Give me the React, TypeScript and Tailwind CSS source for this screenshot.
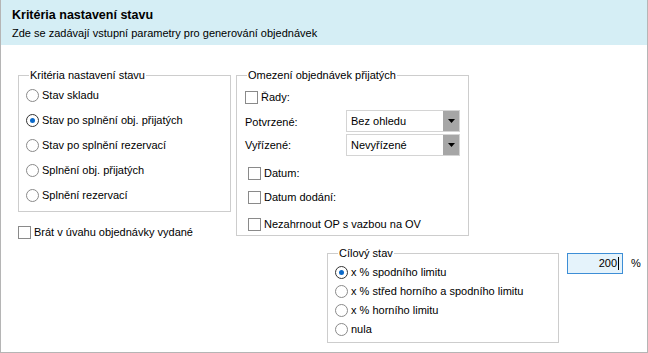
import React from "react";

const font = { fontFamily: '"Liberation Sans", Arial, sans-serif' };

function Radio({ checked }: { checked?: boolean }) {
  return (
    <span
      className={`relative flex h-[13px] w-[13px] shrink-0 items-center justify-center rounded-full border bg-white ${
        checked ? "border-[#333333]" : "border-[#8a8a8a]"
      }`}
    >
      {checked && <span className="h-[5px] w-[5px] rounded-full bg-[#0a68c8]" />}
    </span>
  );
}

function Check() {
  return <span className="block h-[13px] w-[13px] shrink-0 border border-[#8a8a8a] bg-white" />;
}

function RadioRow({ label, checked, h }: { label: string; checked?: boolean; h: string }) {
  return (
    <div className={`flex items-center gap-[3px] ${h}`}>
      <Radio checked={checked} />
      <span>{label}</span>
    </div>
  );
}

function Group({
  title,
  className,
  children,
}: {
  title: string;
  className: string;
  children: React.ReactNode;
}) {
  return (
    <div className={`relative shrink-0 border border-[#cdcdcd] ${className}`}>
      <span className="absolute left-[10px] top-[-8px] bg-white px-[1px] leading-[14px]">{title}</span>
      {children}
    </div>
  );
}

function Select({ value }: { value: string }) {
  return (
    <div className="flex h-[22px] w-[114px] items-stretch border border-[#d4d4d4] bg-white">
      <span className="flex-1 pl-[4px] pt-[3px] leading-[14px]">{value}</span>
      <span className="flex w-[16px] items-center justify-center bg-[#a6a6a6]">
        <svg width="7" height="4" viewBox="0 0 7 4">
          <path d="M0 0h7L3.5 4z" fill="#000" />
        </svg>
      </span>
    </div>
  );
}

export default function App() {
  return (
    <div
      className="h-[353px] w-[648px] overflow-hidden border-b border-l border-r border-[#b5b5b5] bg-white text-[11px] text-black"
      style={font}
    >
      <div className="h-[45px] bg-[#d5eef5] pl-[11px] pt-[8px]">
        <div className="text-[12.5px] font-bold leading-[15px]">Kritéria nastavení stavu</div>
        <div className="mt-[3px] leading-[14px]">Zde se zadávají vstupní parametry pro generování objednávek</div>
      </div>

      <div className="pl-[17px] pt-[30px]">
        <div className="flex items-start">
          <div className="flex flex-col">
            <Group title="Kritéria nastavení stavu" className="h-[137px] w-[213px] pl-[7px] pt-[7px]">
              <RadioRow label="Stav skladu" h="h-[25px]" />
              <RadioRow label="Stav po splnění obj. přijatých" checked h="h-[25px]" />
              <RadioRow label="Stav po splnění rezervací" h="h-[25px]" />
              <RadioRow label="Splnění obj. přijatých" h="h-[25px]" />
              <RadioRow label="Splnění rezervací" h="h-[25px]" />
            </Group>
            <div className="mt-[14px] flex h-[13px] items-center gap-[3px]">
              <Check />
              <span>Brát v úvahu objednávky vydané</span>
            </div>
          </div>

          <Group title="Omezení objednávek přijatých" className="ml-[5px] h-[161px] w-[233px] pt-[11px]">
            <div className="ml-[8px] flex h-[21px] items-center gap-[3px]">
              <Check />
              <span>Řady:</span>
            </div>
            <div className="ml-[8px] mt-[2px] flex h-[22px] items-center">
              <span className="w-[101px] pt-[3px]">Potvrzené:</span>
              <Select value="Bez ohledu" />
            </div>
            <div className="ml-[8px] mt-[2px] flex h-[22px] items-center">
              <span className="w-[101px]">Vyřízené:</span>
              <Select value="Nevyřízené" />
            </div>
            <div className="ml-[11px] mt-[7px] flex h-[21px] items-center gap-[3px]">
              <Check />
              <span>Datum:</span>
            </div>
            <div className="ml-[11px] mt-[3px] flex h-[21px] items-center gap-[3px]">
              <Check />
              <span>Datum dodání:</span>
            </div>
            <div className="ml-[11px] mt-[6px] flex h-[21px] items-center gap-[3px]">
              <Check />
              <span>Nezahrnout OP s vazbou na OV</span>
            </div>
          </Group>
        </div>

        <div className="mt-[14px] flex items-start">
          <Group title="Cílový stav" className="ml-[309px] h-[90px] w-[232px] pl-[7px] pt-[9px]">
            <RadioRow label="x % spodního limitu" checked h="h-[19px]" />
            <RadioRow label="x % střed horního a spodního limitu" h="h-[19px]" />
            <RadioRow label="x % horního limitu" h="h-[19px]" />
            <RadioRow label="nula" h="h-[19px]" />
          </Group>
          <div className="ml-[8px] flex h-[21px] w-[56px] items-center justify-end border border-[#3d8ed6] bg-[#e5f3fb] pr-[3px]">
            <span>200</span>
            <span className="ml-[1px] h-[13px] w-px bg-black" />
          </div>
          <span className="ml-[8px] flex h-[21px] items-center">%</span>
        </div>
      </div>
    </div>
  );
}
